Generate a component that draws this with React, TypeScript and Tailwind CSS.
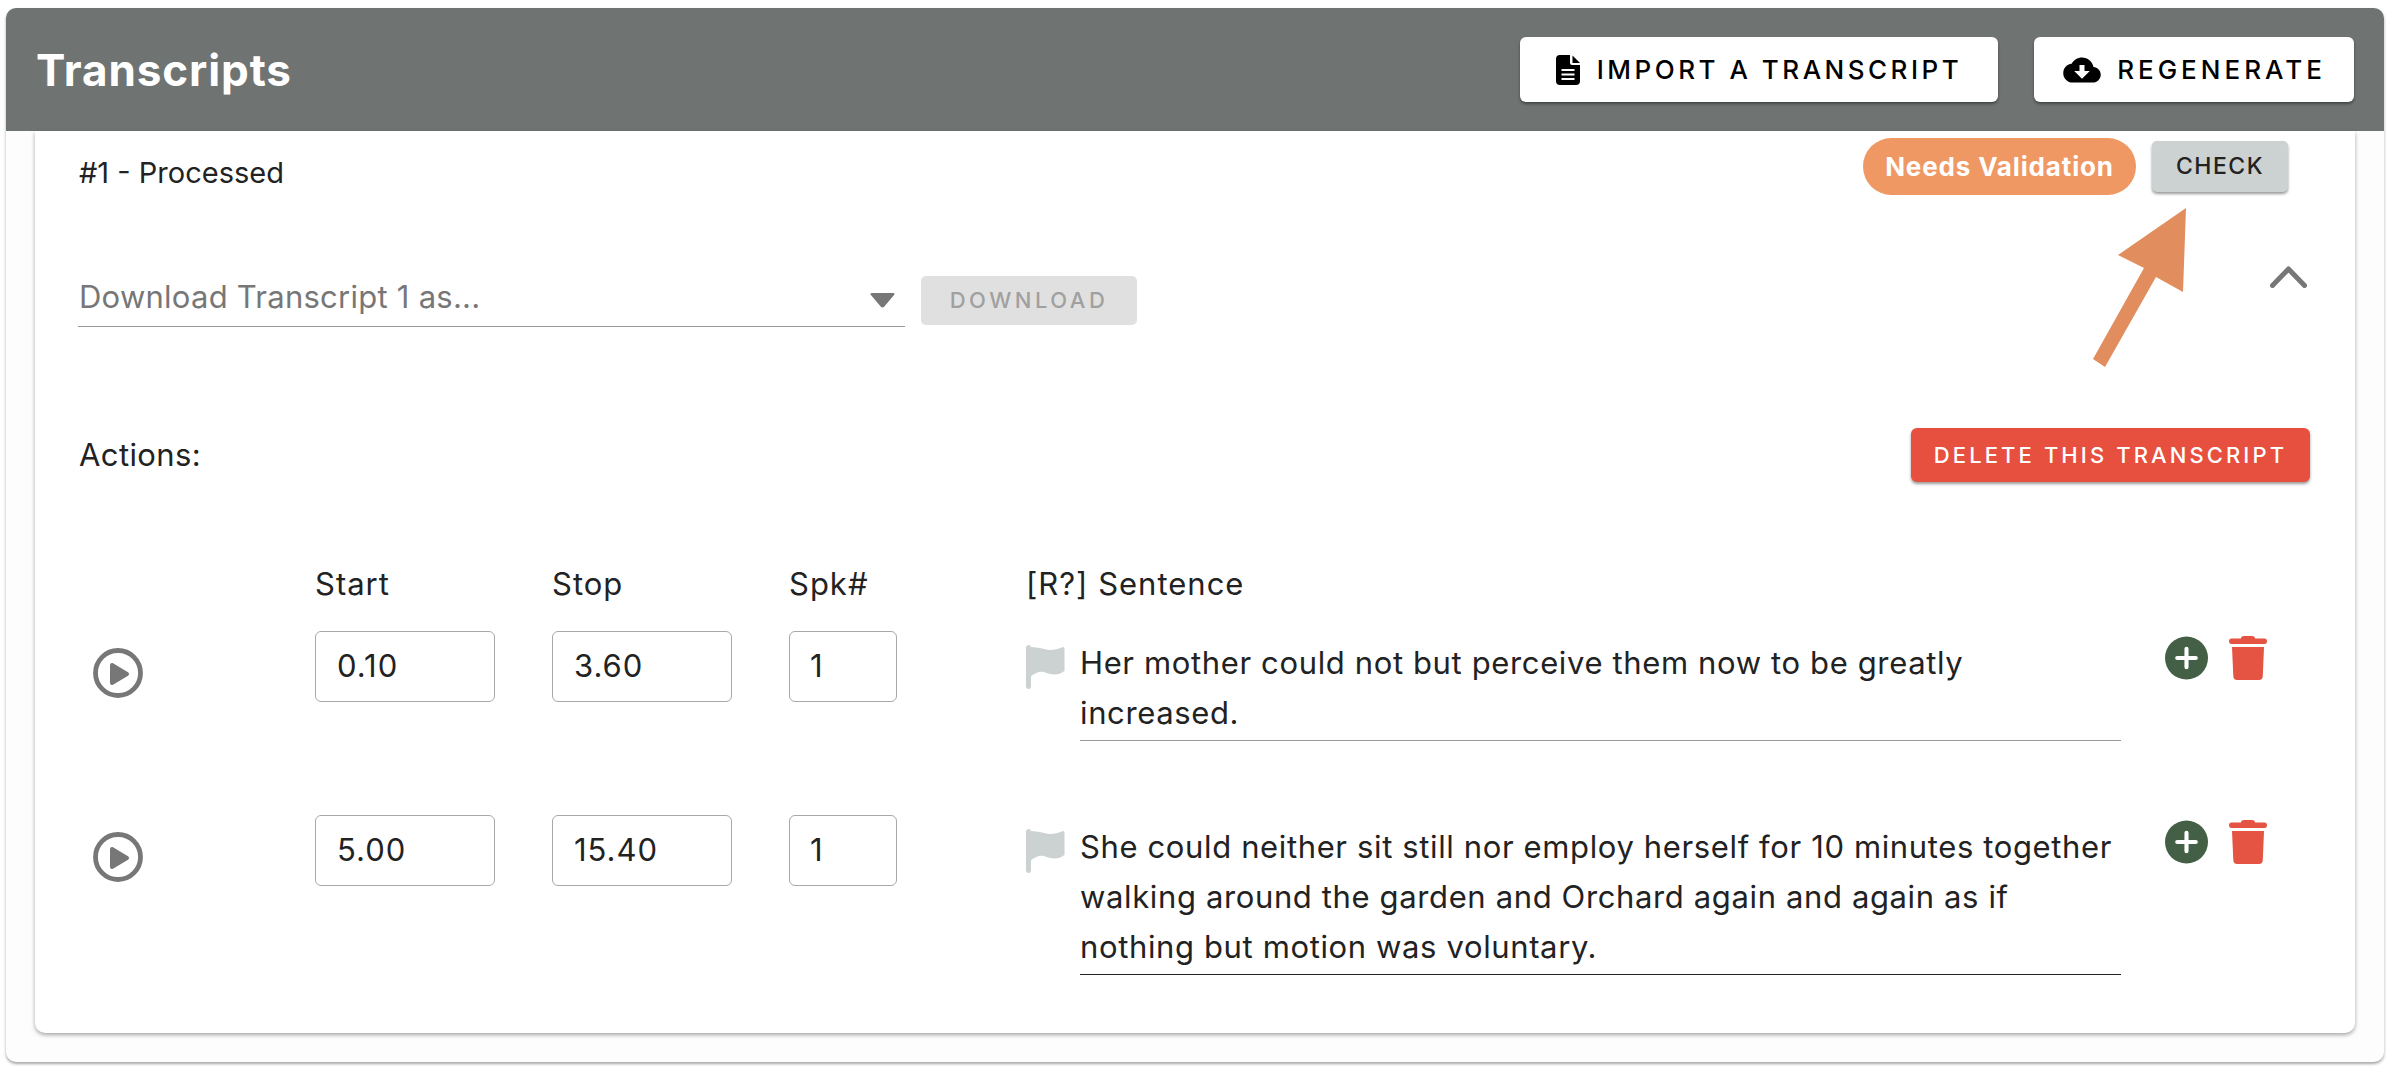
import { IoMdCloudDownload } from 'react-icons/io';

const font = "font-['Inter','Liberation_Sans',sans-serif]";

function FileIcon() {
  return (
    <svg width="24" height="30" viewBox="0 0 24 30">
      <path d="M4 0 L14 0 L14 8 Q14 10 16 10 L24 10 L24 26 Q24 30 20 30 L4 30 Q0 30 0 26 L0 4 Q0 0 4 0 Z" fill="#000" />
      <path d="M16.5 0.5 L24 8 L16.5 8 Z" fill="#000" />
      <path d="M5.5 15 H18.5 M5.5 19.5 H18.5 M5.5 24 H18.5" stroke="#fff" strokeWidth="2.2" />
    </svg>
  );
}

function PlayIcon() {
  return (
    <svg width="50" height="50" viewBox="0 0 50 50">
      <circle cx="25" cy="25" r="22.5" fill="none" stroke="#777" strokeWidth="4.8" />
      <path d="M19 17 L34 26 L19 35 Z" fill="#777" stroke="#777" strokeWidth="4" strokeLinejoin="round" />
    </svg>
  );
}

function FlagIcon() {
  return (
    <svg width="40" height="44" viewBox="0 0 40 44">
      <path d="M0 3 Q0 0 2.5 0 Q5 0 5 3 L5 41 Q5 44 2.5 44 Q0 44 0 41 Z" fill="#ccd2d1" />
      <path d="M4 2 C10 2 14 3 18 4 C24 6 30 5 37 2 Q38.5 2 38.5 4 L38.5 26 C32 31 25 30 18 27 C13 26 9 28 4 32 Z" fill="#ccd2d1" />
    </svg>
  );
}

function PlusIcon() {
  return (
    <svg width="43" height="44" viewBox="0 0 44 44">
      <circle cx="22" cy="22" r="22" fill="#436047" />
      <path d="M12.5 22 H31.5 M22 12.5 V31.5" stroke="#fff" strokeWidth="4.2" strokeLinecap="round" />
    </svg>
  );
}

function TrashIcon() {
  return (
    <svg width="38" height="44" viewBox="0 0 38 44">
      <path d="M12 2.5 Q12 0 15 0 L23 0 Q26 0 26 2.5 L35.5 2.5 Q38 2.5 38 5 Q38 8 35.5 8 L2.5 8 Q0 8 0 5 Q0 2.5 2.5 2.5 Z" fill="#e55343" />
      <path d="M3 11 L35 11 L33.8 40 Q33.6 44 30 44 L8 44 Q4.5 44 4.3 40 Z" fill="#e55343" />
    </svg>
  );
}

type Row = { start: string; stop: string; spk: string; lines: string[]; lineColor: string };

const rows: Row[] = [
  {
    start: '0.10',
    stop: '3.60',
    spk: '1',
    lines: ['Her mother could not but perceive them now to be greatly', 'increased.'],
    lineColor: 'border-[#999]',
  },
  {
    start: '5.00',
    stop: '15.40',
    spk: '1',
    lines: [
      'She could neither sit still nor employ herself for 10 minutes together',
      'walking around the garden and Orchard again and again as if',
      'nothing but motion was voluntary.',
    ],
    lineColor: 'border-[#222]',
  },
];

function NumberBox({ value, wide }: { value: string; wide?: boolean }) {
  return (
    <div className={`${wide ? 'w-[180px] pl-[21px]' : 'w-[108px] pl-[20px]'} h-[71px] flex items-center rounded-[6px] border border-[#a8a8a8] text-[31px] tracking-[1px] text-[#222]`}>
      {value}
    </div>
  );
}

export default function App() {
  return (
    <div className={`${font} relative h-[1074px] w-[2390px] bg-white pt-2 px-[6px] overflow-hidden`}>
      <div className="w-[2378px] h-[1054px] bg-[#fdfdfd] rounded-[10px] shadow-[0_2px_3px_rgba(0,0,0,0.35)]">
        {/* header */}
        <header className="h-[123px] bg-[#6f7473] rounded-t-[10px] flex items-center justify-between pl-[30px] pr-[30px]">
          <h1 className="text-[44px] font-bold text-white tracking-[0.9px]">Transcripts</h1>
          <div className="flex gap-[36px]">
            <button className="w-[478px] h-[65px] bg-white rounded-[6px] shadow-[0_2px_3px_rgba(0,0,0,0.4)] flex items-center justify-center gap-[17px] text-[26px] font-medium tracking-[3.5px] text-black">
              <FileIcon />
              IMPORT A TRANSCRIPT
            </button>
            <button className="w-[320px] h-[65px] bg-white rounded-[6px] shadow-[0_2px_3px_rgba(0,0,0,0.4)] flex items-center justify-center gap-[15px] text-[26px] font-medium tracking-[4px] text-black">
              <IoMdCloudDownload size={40} />
              REGENERATE
            </button>
          </div>
        </header>

        {/* transcript card */}
        <section className="mx-[29px] h-[902px] bg-white rounded-b-[10px] shadow-[0_2px_4px_rgba(0,0,0,0.35)] pl-[43px] pr-[38px]">
          <div className="flex justify-between pt-[7px] pr-[29px]">
            <div className="mt-[18px] ml-px text-[29px] leading-[34px] text-[#222]">#1 - Processed</div>
            <div className="flex items-center gap-[16px]">
              <span className="w-[273px] h-[57px] rounded-full bg-[#ef9864] flex items-center justify-center text-white text-[26px] font-bold tracking-[0.85px]">
                Needs Validation
              </span>
              <button className="w-[136px] h-[51px] rounded-[5px] bg-[#ccd2d1] shadow-[0_2px_3px_rgba(0,0,0,0.4)] text-[23px] font-medium tracking-[1.5px] text-[#222]">
                CHECK
              </button>
            </div>
          </div>

          <div className="flex justify-between mt-[81px]">
            <div className="flex gap-[16px]">
              <div className="w-[827px] h-[51px] border-b border-[#999] flex items-center justify-between pr-[9px]">
                <span className="ml-px pb-[8px] text-[31px] tracking-[0.25px] text-[#777]">Download Transcript 1 as...</span>
                <svg className="mb-[3px]" width="27" height="16" viewBox="0 0 27 17">
                  <path d="M2 1 L25 1 Q27 1 26 3 L15 16 Q13.5 17 12 16 L1 3 Q0 1 2 1 Z" fill="#777" />
                </svg>
              </div>
              <button className="w-[216px] h-[49px] rounded-[5px] bg-[#e0e0e0] text-[22px] font-medium tracking-[3.5px] text-[#a0a0a0]">
                DOWNLOAD
              </button>
            </div>
            <svg className="mt-[-10px] mr-[10px]" width="37" height="22" viewBox="0 0 37 22">
              <path d="M2.5 19.5 L18.5 3 L34.5 19.5" fill="none" stroke="#777" strokeWidth="5" strokeLinecap="round" strokeLinejoin="round" />
            </svg>
          </div>

          <div className="flex justify-between items-center mt-[101px]">
            <div className="ml-px text-[31px] tracking-[0.4px] text-[#222]">Actions:</div>
            <button className="w-[399px] h-[54px] mr-[7px] rounded-[6px] bg-[#e74f3f] shadow-[0_2px_3px_rgba(0,0,0,0.4)] text-white text-[22px] font-medium tracking-[3.1px]">
              DELETE THIS TRANSCRIPT
            </button>
          </div>

          {/* column heads */}
          <div className="flex pl-[237px] mt-[85px] text-[31px] leading-[34px] tracking-[1px] text-[#222]">
            <div className="w-[237px]">Start</div>
            <div className="w-[237px]">Stop</div>
            <div className="w-[237px]">Spk#</div>
            <div>[R?] Sentence</div>
          </div>

          {/* rows */}
          <div className="mt-[30px] flex flex-col gap-[74px]">
            {rows.map((r) => (
              <div key={r.start} className="flex items-start">
                <div className="w-[237px] pl-[15px] pt-[17px]">
                  <PlayIcon />
                </div>
                <div className="w-[237px]">
                  <NumberBox value={r.start} wide />
                </div>
                <div className="w-[237px]">
                  <NumberBox value={r.stop} wide />
                </div>
                <div className="w-[237px]">
                  <NumberBox value={r.spk} />
                </div>
                <div className="w-[54px] pt-[14px]">
                  <FlagIcon />
                </div>
                <div className={`w-[1041px] border-b ${r.lineColor} pt-[7px] pb-[2px] text-[31px] leading-[50px] tracking-[0.63px] text-[#222]`}>
                  {r.lines.map((l) => (
                    <div key={l} className="whitespace-nowrap">{l}</div>
                  ))}
                </div>
                <div className="flex items-center gap-[21px] ml-[44px] pt-[5px]">
                  <PlusIcon />
                  <TrashIcon />
                </div>
              </div>
            ))}
          </div>
        </section>
      </div>

      {/* annotation arrow */}
      <svg className="absolute left-[2085px] top-[200px]" width="110" height="175" viewBox="2085 200 110 175">
        <path d="M2186 208 L2118 255 L2144 268 L2093 359 L2105 367 L2156 277 L2183 292 Z" fill="#e28d5d" />
      </svg>
    </div>
  );
}
